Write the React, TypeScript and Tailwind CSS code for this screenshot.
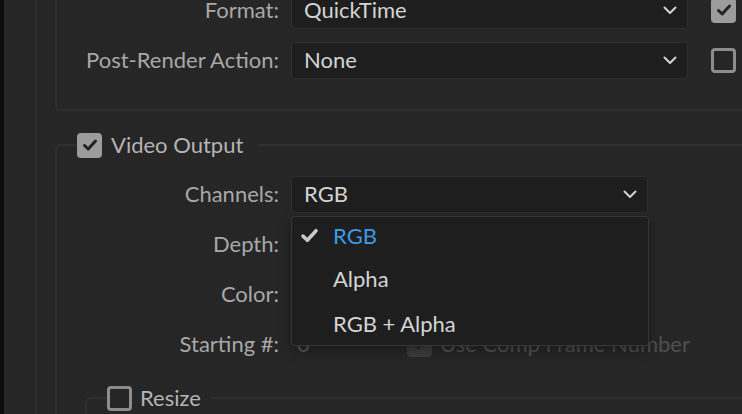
import React from "react";

function Chevron() {
  return (
    <svg width="14" height="9" viewBox="0 0 14 9" fill="none">
      <path d="M1.5 1.5 L7 7 L12.5 1.5" stroke="#d2d2d2" strokeWidth="2" strokeLinecap="round" strokeLinejoin="round" />
    </svg>
  );
}

function Check({ color = "#222222", size = 16 }: { color?: string; size?: number }) {
  return (
    <svg width={size} height={size} viewBox="0 0 16 16" fill="none">
      <path d="M2.5 8.5 L6.2 12 L13.5 4" stroke={color} strokeWidth="3" strokeLinecap="round" strokeLinejoin="round" />
    </svg>
  );
}

function Checkbox({ checked, disabled }: { checked?: boolean; disabled?: boolean }) {
  if (checked) {
    return (
      <div
        className={
          "flex h-[25px] w-[25px] shrink-0 items-center justify-center rounded-[4px] " +
          (disabled ? "bg-[#3c3c3c]" : "bg-[#9c9c9c]")
        }
      >
        <Check color={disabled ? "#2a2a2a" : "#232323"} />
      </div>
    );
  }
  return <div className="h-[25px] w-[25px] shrink-0 rounded-[4px] border-[3px] border-[#8d8d8d]" />;
}

function Dropdown({ value, width }: { value: string; width: string }) {
  return (
    <div
      className={
        "flex h-[37px] items-center justify-between overflow-hidden whitespace-nowrap rounded-[4px] border border-[#2e2e2e] bg-[#1e1e1e] pl-[12px] pr-[10px] text-[#d4d4d4] " +
        width
      }
    >
      <span>{value}</span>
      <Chevron />
    </div>
  );
}

function Label({ text, width }: { text: string; width: string }) {
  return <div className={"shrink-0 whitespace-nowrap pr-[12px] text-right text-[#a8a8a8] " + width}>{text}</div>;
}

export default function App() {
  return (
    <div className="flex h-[414px] w-[742px] overflow-hidden bg-[#262626] font-['Lato',sans-serif] text-[22px] leading-[26px]">
      <div className="w-[4px] shrink-0 bg-[#0c0c0c]" />
      <div className="ml-[31px] shrink-0 border-l-2 border-[#2d2d2d] pl-[18px]">
        {/* Output module group (top, cut off) */}
        <div className="-mt-[15px] w-[730px] rounded-bl-[6px] border-b-2 border-l-2 border-[#2f2f2f] pb-[24px]">
          <div className="flex h-[50px] items-center">
            <Label text="Format:" width="w-[234px]" />
            <Dropdown value="QuickTime" width="w-[397px]" />
            <div className="ml-[23px]">
              <Checkbox checked />
            </div>
          </div>
          <div className="flex h-[50px] items-center">
            <Label text="Post-Render Action:" width="w-[234px]" />
            <Dropdown value="None" width="w-[397px]" />
            <div className="ml-[23px]">
              <Checkbox />
            </div>
          </div>
        </div>

        {/* Video Output group */}
        <fieldset className="mt-[21px] w-[730px] rounded-tl-[6px] border-l-2 border-t-2 border-[#2f2f2f] pl-[20px]">
          <legend className="pr-[14px]">
            <div className="flex items-center gap-[9px] text-[#b4b4b4]">
              <Checkbox checked />
              <span>Video Output</span>
            </div>
          </legend>

          <div className="mt-[11px]">
            <div className="flex h-[50px] items-center">
              <Label text="Channels:" width="w-[214px]" />
              <div className="relative">
                <Dropdown value="RGB" width="w-[357px]" />
                <div className="absolute left-0 top-full z-10 mt-[3px] w-[358px] rounded-[3px] border border-[#363636] bg-[#1e1e1e] shadow-[0_4px_12px_rgba(0,0,0,0.35)]">
                  <div className="flex h-[38px] items-center">
                    <div className="flex w-[41px] justify-start pl-[8px]">
                      <Check color="#c9c9c9" size={19} />
                    </div>
                    <span className="text-[#3d9ae6]">RGB</span>
                  </div>
                  <div className="flex h-[48px] items-center pl-[41px] text-[#d4d4d4]">Alpha</div>
                  <div className="flex h-[42px] items-center pl-[41px] text-[#d4d4d4]">RGB + Alpha</div>
                </div>
              </div>
            </div>
            <div className="flex h-[50px] items-center">
              <Label text="Depth:" width="w-[214px]" />
              <Dropdown value="Millions of Colors" width="w-[300px]" />
            </div>
            <div className="flex h-[50px] items-center">
              <Label text="Color:" width="w-[214px]" />
              <Dropdown value="Premultiplied (Matted)" width="w-[300px]" />
            </div>
            <div className="flex h-[50px] items-center">
              <Label text="Starting #:" width="w-[214px]" />
              <span className="w-[116px] pl-[6px] text-[#5a5a5a]">0</span>
              <div className="flex items-center gap-[8px] whitespace-nowrap text-[#4f4f4f]">
                <Checkbox checked disabled />
                <span>Use Comp Frame Number</span>
              </div>
            </div>
          </div>

          {/* Resize group */}
          <fieldset className="ml-[8px] mt-[16px] h-[80px] rounded-tl-[6px] border-l-2 border-t-2 border-[#2f2f2f] pl-[20px]">
            <legend className="pr-[10px]">
              <div className="flex items-center gap-[8px] text-[#b4b4b4]">
                <Checkbox />
                <span>Resize</span>
              </div>
            </legend>
          </fieldset>
        </fieldset>
      </div>
    </div>
  );
}
